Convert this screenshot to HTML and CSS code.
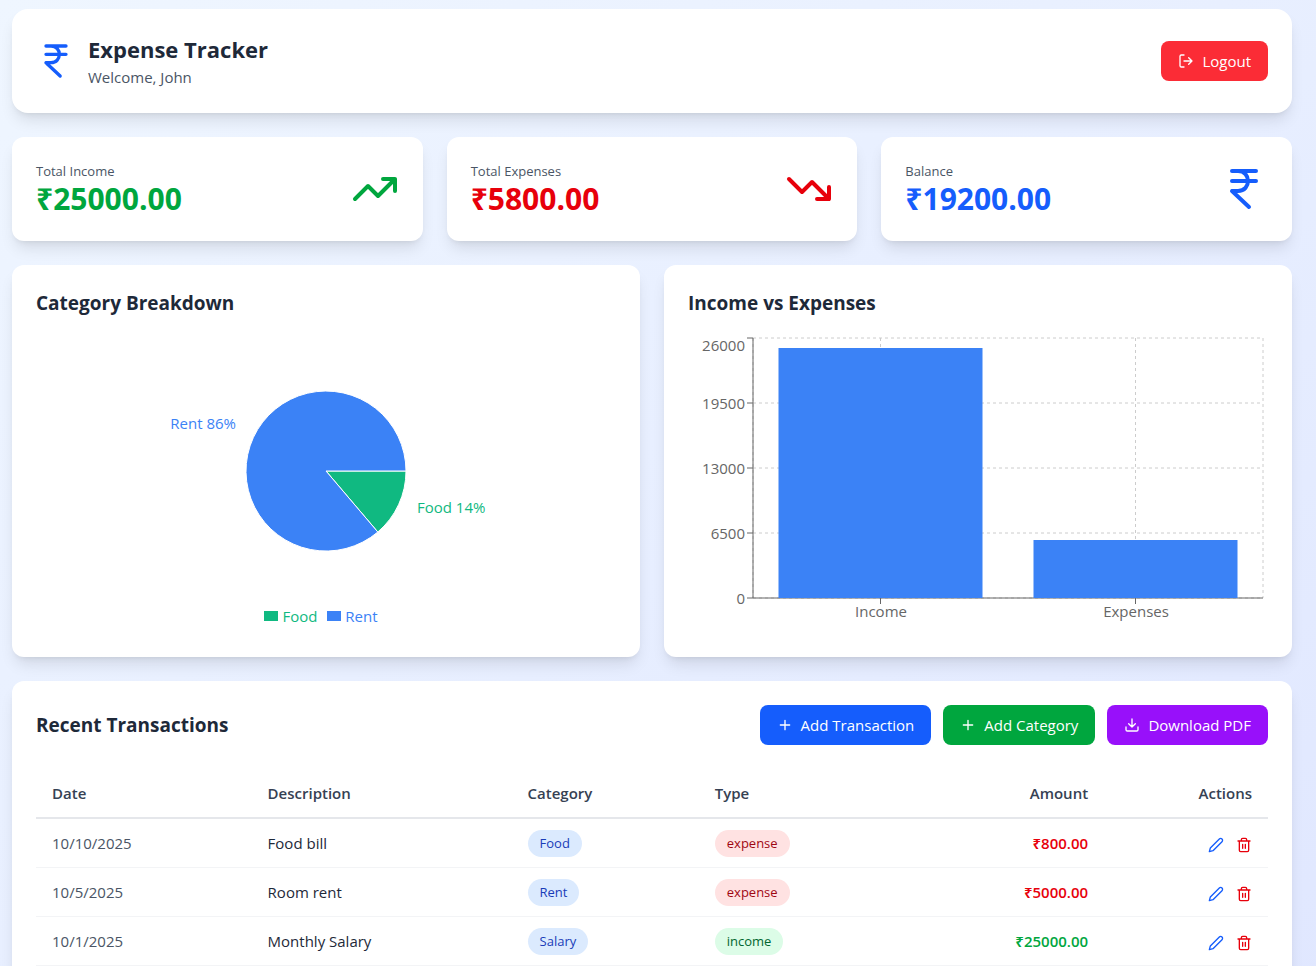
FILE: index.html
```html
<!DOCTYPE html>
<html lang="en">
<head>
<meta charset="utf-8">
<meta name="viewport" content="width=device-width, initial-scale=1">
<title>Expense Tracker</title>
<link rel="stylesheet" href="styles.css">
</head>
<body>
<svg class="sprite" aria-hidden="true">
  <symbol id="rupee" viewBox="0 0 24 24"><path d="M6 3h12M6 8h12M6 13l8.5 8M6 13h3M9 13c6.667 0 6.667-10 0-10"/></symbol>
  <symbol id="plus" viewBox="0 0 24 24"><path d="M5 12h14M12 5v14"/></symbol>
  <symbol id="pencil" viewBox="0 0 24 24"><path d="M17 3a2.828 2.828 0 1 1 4 4L7.500 20.500 2 22l1.500-5.500L17 3z"/></symbol>
  <symbol id="trash" viewBox="0 0 24 24"><path d="M3 6h18M19 6v14a2 2 0 0 1-2 2H7a2 2 0 0 1-2-2V6M8 6V4a2 2 0 0 1 2-2h4a2 2 0 0 1 2 2v2M10 11v6M14 11v6"/></symbol>
</svg>
<main class="page">
  <header class="card header">
    <div class="brand">
      <svg class="icon icon-40 blue"><use href="#rupee"/></svg>
      <div>
        <h1 class="title">Expense Tracker</h1>
        <p class="welcome">Welcome, John</p>
      </div>
    </div>
    <button class="btn btn-red" type="button">
      <svg class="icon icon-16" viewBox="0 0 24 24"><path d="m16 17 5-5-5-5M21 12H9M9 21H5a2 2 0 0 1-2-2V5a2 2 0 0 1 2-2h4"/></svg>
      Logout
    </button>
  </header>

  <section class="stats" aria-label="Totals">
    <div class="card stat">
      <div><p class="stat-label">Total Income</p><p class="stat-value green">₹25000.00</p></div>
      <svg class="icon icon-48 green" viewBox="0 0 24 24"><path d="M16 7h6v6M22 7l-8.5 8.5-5-5L2 17"/></svg>
    </div>
    <div class="card stat">
      <div><p class="stat-label">Total Expenses</p><p class="stat-value red">₹5800.00</p></div>
      <svg class="icon icon-48 red" viewBox="0 0 24 24"><path d="M16 17h6v-6M22 17l-8.5-8.5-5 5L2 7"/></svg>
    </div>
    <div class="card stat">
      <div><p class="stat-label">Balance</p><p class="stat-value blue">₹19200.00</p></div>
      <svg class="icon icon-48 blue"><use href="#rupee"/></svg>
    </div>
  </section>

  <section class="charts">
    <div class="card">
      <h2 class="heading">Category Breakdown</h2>
      <svg class="chart" viewBox="0 0 580 271" role="img" aria-label="Rent 86%, Food 14%">
        <g stroke="#fff">
          <path fill="#10b981" d="M290 138H370A80 80 0 0 1 341.8 199Z"/>
          <path fill="#3b82f6" d="M290 138L341.8 199A80 80 0 1 1 370 138Z"/>
        </g>
        <text class="chart-text" x="200" y="96" text-anchor="end" fill="#3b82f6">Rent 86%</text>
        <text class="chart-text" x="381" y="180" fill="#10b981">Food 14%</text>
      </svg>
      <ul class="legend">
        <li class="legend-item legend-food">Food</li>
        <li class="legend-item legend-rent">Rent</li>
      </ul>
    </div>
    <div class="card">
      <h2 class="heading">Income vs Expenses</h2>
      <svg class="chart" viewBox="0 0 580 300" role="img" aria-label="Income 25000, Expenses 5800">
        <g stroke="#ccc" stroke-dasharray="3 3">
          <path d="M65 200H575"/><path d="M65 135H575"/><path d="M65 70H575"/><path d="M65 5H575"/><path d="M65 265H575"/>
          <path d="M192.5 5V265"/><path d="M447.5 5V265"/><path d="M65 5V265"/><path d="M575 5V265"/>
        </g>
        <path stroke="#666" fill="none" d="M65 5V265M65 265H575M59 5h6M59 70h6M59 135h6M59 200h6M59 265h6M192.5 265v6M447.5 265v6"/>
        <g fill="#3b82f6">
          <path d="M90.5 15h204v250h-204z"/>
          <path d="M345.5 207h204v58h-204z"/>
        </g>
        <g class="chart-text" fill="#666" text-anchor="end">
          <text x="57" y="18">26000</text>
          <text x="57" y="76">19500</text>
          <text x="57" y="141">13000</text>
          <text x="57" y="206">6500</text>
          <text x="57" y="271">0</text>
        </g>
        <g class="chart-text" fill="#666" text-anchor="middle">
          <text x="193" y="284">Income</text>
          <text x="448" y="284">Expenses</text>
        </g>
      </svg>
    </div>
  </section>

  <section class="card">
    <div class="toolbar">
      <h2 class="heading">Recent Transactions</h2>
      <div class="actions">
        <button class="btn btn-blue" type="button"><svg class="icon icon-16"><use href="#plus"/></svg>Add Transaction</button>
        <button class="btn btn-green" type="button"><svg class="icon icon-16"><use href="#plus"/></svg>Add Category</button>
        <button class="btn btn-purple" type="button"><svg class="icon icon-16" viewBox="0 0 24 24"><path d="M12 15V3M21 15v4a2 2 0 0 1-2 2H5a2 2 0 0 1-2-2v-4M7 10l5 5 5-5"/></svg>Download PDF</button>
      </div>
    </div>
    <table class="table">
      <thead>
        <tr><th class="col-date">Date</th><th class="col-desc">Description</th><th class="col-cat">Category</th><th class="col-type">Type</th><th class="col-amount right">Amount</th><th class="right">Actions</th></tr>
      </thead>
      <tbody>
        <tr>
          <td class="date">10/10/2025</td><td>Food bill</td>
          <td><span class="pill pill-blue">Food</span></td><td><span class="pill pill-red">expense</span></td>
          <td class="right amount red">₹800.00</td>
          <td><div class="row-actions"><button class="icon-btn blue" type="button" aria-label="Edit"><svg class="icon icon-16"><use href="#pencil"/></svg></button><button class="icon-btn red" type="button" aria-label="Delete"><svg class="icon icon-16"><use href="#trash"/></svg></button></div></td>
        </tr>
        <tr>
          <td class="date">10/5/2025</td><td>Room rent</td>
          <td><span class="pill pill-blue">Rent</span></td><td><span class="pill pill-red">expense</span></td>
          <td class="right amount red">₹5000.00</td>
          <td><div class="row-actions"><button class="icon-btn blue" type="button" aria-label="Edit"><svg class="icon icon-16"><use href="#pencil"/></svg></button><button class="icon-btn red" type="button" aria-label="Delete"><svg class="icon icon-16"><use href="#trash"/></svg></button></div></td>
        </tr>
        <tr>
          <td class="date">10/1/2025</td><td>Monthly Salary</td>
          <td><span class="pill pill-blue">Salary</span></td><td><span class="pill pill-green">income</span></td>
          <td class="right amount green">₹25000.00</td>
          <td><div class="row-actions"><button class="icon-btn blue" type="button" aria-label="Edit"><svg class="icon icon-16"><use href="#pencil"/></svg></button><button class="icon-btn red" type="button" aria-label="Delete"><svg class="icon icon-16"><use href="#trash"/></svg></button></div></td>
        </tr>
      </tbody>
    </table>
  </section>
</main>
</body>
</html>
```
FILE: styles.css
```css
* { box-sizing: border-box; }

body {
  margin: 0;
  color: #1e2939;
  font: 15px/24px "Segoe UI", "Open Sans", "Noto Sans", sans-serif;
  background: linear-gradient(to bottom right, #eff6ff, #e0e7ff);
}

h1, h2, p, ul { margin: 0; padding: 0; }
button { font: inherit; border: 0; cursor: pointer; }

.sprite { position: absolute; width: 0; height: 0; }

.page {
  display: flex;
  flex-direction: column;
  gap: 24px;
  min-height: 100vh;
  padding: 9px 24px 24px 12px;
}

.card {
  padding: 24px;
  border-radius: 12px;
  background: #fff;
  box-shadow: 0 10px 15px -3px rgb(0 0 0 / .1), 0 4px 6px -4px rgb(0 0 0 / .1);
}

.icon {
  flex: none;
  fill: none;
  stroke: currentColor;
  stroke-width: 2;
  stroke-linecap: round;
  stroke-linejoin: round;
}
.icon-16 { width: 16px; height: 16px; }
.icon-40 { width: 40px; height: 40px; }
.icon-48 { width: 48px; height: 48px; }

.blue { color: #155dfc; }
.green { color: #00a63e; }
.red { color: #e7000b; }

.header {
  display: flex;
  align-items: center;
  justify-content: space-between;
  border-radius: 16px;
}
.brand { display: flex; align-items: center; gap: 12px; }
.title { font-size: 22px; line-height: 32px; font-weight: 700; }
.welcome { color: #4a5565; }

.btn {
  display: flex;
  align-items: center;
  gap: 8px;
  padding: 8px 17px;
  border-radius: 8px;
  color: #fff;
}
.btn-red { background: #fb2c36; }
.btn-blue { background: #155dfc; }
.btn-green { background: #00a63e; }
.btn-purple { background: #9810fa; }

.stats { display: grid; grid-template-columns: repeat(3, 1fr); gap: 24px; }
.stat { display: flex; align-items: center; justify-content: space-between; }
.stat-label { font-size: 13px; line-height: 20px; color: #4a5565; }
.stat-value { font-size: 30px; line-height: 36px; font-weight: 700; }

.charts { display: grid; grid-template-columns: repeat(2, 1fr); gap: 24px; }
.heading { font-size: 19px; line-height: 28px; font-weight: 700; }
.chart { display: block; width: 100%; height: auto; margin-top: 16px; }
.chart-text { font-size: 15px; }

.legend {
  display: flex;
  justify-content: center;
  padding-bottom: 4px;
  list-style: none;
}
.legend-item { display: flex; align-items: center; gap: 4px; margin-right: 10px; }
.legend-item::before { content: ""; width: 14px; height: 10px; background: currentColor; }
.legend-food { color: #10b981; }
.legend-rent { color: #3b82f6; }

.toolbar {
  display: flex;
  align-items: center;
  justify-content: space-between;
  margin-bottom: 24px;
}
.actions { display: flex; gap: 12px; }

.table { width: 100%; border-collapse: separate; border-spacing: 0; table-layout: fixed; }
.table th {
  height: 50px;
  padding: 0 16px;
  border-bottom: 2px solid #e5e7eb;
  color: #364153;
  font-weight: 600;
  text-align: left;
}
.table td { height: 49px; padding: 0 16px; border-bottom: 1px solid #f3f4f6; }
.col-date { width: 17.5%; }
.col-desc { width: 21.1%; }
.col-cat { width: 15.2%; }
.col-type { width: 15.2%; }
.col-amount { width: 17.7%; }
.table .right { text-align: right; }
.date { color: #4a5565; }
.amount { font-weight: 600; }

.pill {
  display: inline-block;
  padding: 4px 12px;
  border-radius: 999px;
  font-size: 13px;
  line-height: 19px;
  vertical-align: middle;
}
.pill-blue { color: #193cb8; background: #dbeafe; }
.pill-red { color: #9f0712; background: #ffe2e2; }
.pill-green { color: #016630; background: #dcfce7; }

.row-actions { display: flex; justify-content: flex-end; gap: 12px; padding-top: 4px; }
.icon-btn { display: flex; padding: 0; background: none; }
```
